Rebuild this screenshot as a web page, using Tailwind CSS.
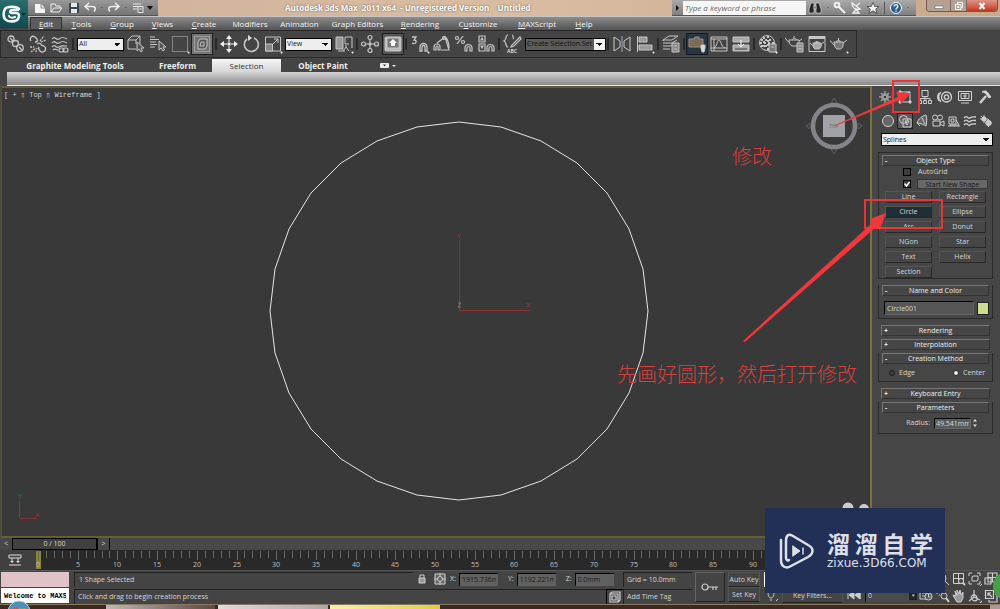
<!DOCTYPE html>
<html lang="en">
<head>
<meta charset="utf-8">
<title>Autodesk 3ds Max 2011 x64</title>
<script src="https://cdn.jsdelivr.net/npm/@tailwindcss/browser@4"></script>
</head>
<body class="relative flex min-h-screen flex-col overflow-hidden bg-[#444] font-['Open_Sans','Noto_Sans_CJK_SC',sans-serif] text-[7px] leading-[10px] text-[#d6d6d6]">

<header class="flex h-[30px]">
  <button aria-label="Application menu" class="flex h-7 w-7 shrink-0 items-center justify-center bg-linear-to-b from-[#2b6d70] to-[#0d4b50]">
    <svg viewBox="0 0 28 28" class="size-7 fill-none stroke-[#eef5f4]" stroke-linecap="round"><path stroke-width="2.600" d="M19 9C17 6 7 6 5 9s-2 9 1 11 10 2 12-1 1-6-2-6h-4c-3 0-2-3 0-3h6"/><path stroke-width="2.200" d="M9 16c1 2 4 2 6 1"/><path stroke="none" fill="#082c30" d="M21 13h5l-2.500 3z"/></svg>
  </button>
  <div class="flex min-w-0 grow flex-col">
    <div class="flex h-4 bg-linear-to-r from-[#cfb19b] via-[#d9bda2] to-[#c9a98c]">
      <div class="flex w-[130px] shrink-0 items-center border-b border-[#555] bg-linear-to-b from-[#999] to-[#747474] pl-1">
        <button aria-label="New" class="w-4"><svg viewBox="0 0 16 16" class="size-4"><path d="M3 4h6l4 4v5H3z" fill="#f4f4f4"/><path d="M9 4v4h4" fill="none" stroke="#888"/></svg></button>
        <button aria-label="Open" class="w-[18px]"><svg viewBox="0 0 16 16" class="size-4 fill-none stroke-[#f0f0f0]"><path d="M3 12V4h4l1 2h4v2M3 12l3-4h8l-3 4z"/></svg></button>
        <button aria-label="Save" class="w-4"><svg viewBox="0 0 16 16" class="size-4"><path d="M3 3h10v10H3z" fill="#374654"/><path d="M5 3h6v4H5zM5 9h6v4H5z" fill="#e8e8e8"/></svg></button>
        <button aria-label="Undo" class="w-4"><svg viewBox="0 0 16 16" class="size-4 fill-none stroke-[#f0f0f0]" stroke-width="1.500"><path d="M7 3L3 6.500 7 10M4 6.500h6c4 0 4 3 2 5"/></svg></button>
        <span class="w-2 text-center text-[#222]">·</span>
        <button aria-label="Redo" class="w-4"><svg viewBox="0 0 16 16" class="size-4 fill-none stroke-[#f0f0f0]" stroke-width="1.500"><path d="M9 3l4 3.500L9 10M12 6.500H6c-4 0-4 3-2 5"/></svg></button>
        <span class="w-2 text-center text-[#222]">·</span>
        <button aria-label="Project folder" class="w-4"><svg viewBox="0 0 16 16" class="size-4 fill-none stroke-[#e8e8e8]"><path d="M3 4h8M3 6.500h8M3 9h4M8 6.500h5v6H8zM9.500 9h2"/></svg></button>
        <button aria-label="Customize toolbar" class="w-2"><svg viewBox="0 0 8 8" class="size-2"><path d="M1 2h6L4 6z" fill="#111"/></svg></button>
      </div>
      <h1 class="min-w-0 grow truncate pl-[127px] text-[8px] leading-4 font-bold whitespace-pre text-white [text-shadow:0_0_2px_#5b4a40]">Autodesk 3ds Max  2011 x64  - Unregistered Version    Untitled</h1>
      <div class="flex w-[244px] shrink-0 items-center border-b border-[#555] bg-linear-to-b from-[#aaa] to-[#808080]">
        <svg viewBox="0 0 11 14" class="h-3.5 w-[11px]"><path d="M4 4l3 3-3 3z" fill="#111"/></svg>
        <input aria-label="Search" placeholder="Type a keyword or phrase" class="h-3.5 w-[123px] bg-[#f6f6f6] px-0.5 text-[8px] text-black italic placeholder:text-[#666]">
        <button aria-label="Find" class="w-[18px] pl-px"><svg viewBox="0 0 16 16" class="size-4 fill-[#262626] stroke-[#e6e6e6]" stroke-width=".6"><path d="M4 3h3v10H2V9zM9 3h3l2 6v4H9zM7 6h2v3H7z"/></svg></button>
        <span class="w-2 text-center text-black">·</span>
        <button aria-label="Subscription" class="w-4"><svg viewBox="0 0 16 16" class="size-4 fill-none stroke-[#f3f3f3]" stroke-width="2"><path d="M7 7l6 6"/><circle cx="5" cy="5" r="2.300"/></svg></button>
        <button aria-label="Communication" class="w-[17px]"><svg viewBox="0 0 16 16" class="size-4 fill-none stroke-[#f0f0f0]" stroke-width="1.300"><path d="M4 3c0 5 3 7 8 6zM8 6l4-3M5 13h6l-3-4z"/></svg></button>
        <button aria-label="Favorites" class="w-4"><svg viewBox="0 0 16 16" class="size-4"><path d="M8 2.500l1.700 4H14l-3.300 2.600L12 13.500 8 10.800 4 13.500l1.300-4.400L2 6.500h4.300z" fill="#f4f4f4" stroke="#333" stroke-width=".7"/></svg></button>
        <span class="mx-[3px] h-3 w-px bg-[#555]"></span>
        <button aria-label="Help" class="w-4"><svg viewBox="0 0 16 16" class="size-4"><circle cx="8" cy="8" r="5.500" fill="#2a5d97" stroke="#fff"/><path d="M6.200 6.500c0-2.500 3.800-2.300 3.600 0C9.700 8 8 7.800 8 9.400M8 10.500v1.300" fill="none" stroke="#fff" stroke-width="1.300"/></svg></button>
        <span class="w-2 text-center text-black">·</span>
      </div>
      <div class="flex w-[84px] shrink-0 pr-0.5 pl-2.5">
        <div class="flex h-3 w-full overflow-hidden rounded-b border border-t-0 border-[#6f5a50]">
          <button aria-label="Minimize" class="flex w-[23px] items-center justify-center bg-[#b5a194]"><svg viewBox="0 0 10 10" class="size-2.5"><path d="M1 5h8v2.500H1z" fill="#fff" stroke="#555" stroke-width=".5"/></svg></button>
          <button aria-label="Restore" class="flex w-[17px] items-center justify-center border-x border-[#7d6b60] bg-[#b5a194]"><svg viewBox="0 0 10 10" class="size-2.5 fill-none stroke-white"><path d="M3.500 3V1.500h5v5H7M1.500 3.500H7v5H1.500zM3.500 5.500h1.500v1H3.500z"/></svg></button>
          <button aria-label="Close" class="flex grow items-center justify-center bg-linear-to-b from-[#dd9487] to-[#c2351c]"><svg viewBox="0 0 10 10" class="size-2.5 stroke-white" stroke-width="2"><path d="M2.500 2l5 6M7.500 2l-5 6"/></svg></button>
        </div>
      </div>
    </div>
    <nav class="flex h-3.5 items-center border-t border-[#c5c5c5] bg-linear-to-b from-[#8d8d8d] to-[#535353] pl-0.5 text-[8px] leading-3 text-[#f2f2f2]">
      <button class="w-8 border border-[#333] bg-[#5c5c5c] leading-[11px]"><u>E</u>dit</button>
      <button class="w-[39px]"><u>T</u>ools</button>
      <button class="w-[42px]"><u>G</u>roup</button>
      <button class="w-[39px]"><u>V</u>iews</button>
      <button class="w-[44px]"><u>C</u>reate</button>
      <button class="w-12">Modifiers</button>
      <button class="w-[51px]">Animation</button>
      <button class="w-[65px]">Graph Editors</button>
      <button class="w-[60px]"><u>R</u>endering</button>
      <button class="w-14">C<u>u</u>stomize</button>
      <button class="w-[62px]"><u>M</u>AXScript</button>
      <button class="w-8"><u>H</u>elp</button>
    </nav>
  </div>
</header>

<div role="toolbar" aria-label="Main toolbar" class="flex h-[28px] w-[857px] items-center border border-[#292929] pl-1 [&_button]:flex [&_button]:h-[22px] [&_button]:w-[22px] [&_button]:shrink-0 [&_button]:items-center [&_button]:justify-center [&_hr]:mx-px [&_hr]:h-3 [&_hr]:w-0.5 [&_hr]:shrink-0 [&_hr]:border-0 [&_hr]:bg-[#292929] [&_svg]:size-5 [&_svg]:fill-none [&_svg]:stroke-[#c6c6c6]">
  <button aria-label="Link"><svg viewBox="0 0 20 20" stroke-width="1.300"><circle cx="5" cy="5" r="3"/><circle cx="9.500" cy="9.500" r="3"/><circle cx="14" cy="14" r="3.300"/><path d="M4 4l3 3M13 13l3 3"/></svg></button>
  <button aria-label="Unlink"><svg viewBox="0 0 20 20" stroke-width="1.300"><path d="M3 7c-2-3 1-6 4-4l2 2c1 2 0 3-2 3M9 10c3-2 4 0 5 2M12 17c3 3 7-1 5-4l-3-2M11 13c-1 2 0 3 1 4"/><path stroke-dasharray="2 1" d="M12 7l4-5M13 8l5-2M3 18l5-4M2 13h4M8 18l1-4"/></svg></button>
  <button aria-label="Bind to space warp"><svg viewBox="0 0 20 20" stroke-width="1.200"><path d="M2 5c3-4 4 2 7 0s4-2 8 0M2 9c3-4 4 2 7 0s4-2 8 0M2 13c3-4 4 2 7 0s3-1 8-1M3 16c2-2 3 0 5 0"/><rect x="9" y="14" width="5" height="4" rx="2"/><rect x="13" y="14" width="5" height="4" rx="2"/></svg></button>
  <hr class="mr-[3px]!">
  <select aria-label="Selection filter" class="mr-px h-[13px] w-[47px] shrink-0 appearance-none border border-black bg-[#eee] bg-[conic-gradient(from_-45deg_at_50%_100%,#111_90deg,transparent_0)] bg-size-[6px_3px] bg-position-[right_3px_center] bg-no-repeat px-px text-[7px] text-[#222]"><option>All</option></select>
  <button aria-label="Select object"><svg viewBox="0 0 20 20"><path d="M2 6l4-4h8v8M2 6v9h8M2 6h8l4-4M10 6v4"/><path fill="#555" d="M11 8v9l2-2 2 3 1.500-1-1.500-3h3z"/></svg></button>
  <button aria-label="Select by name"><svg viewBox="0 0 20 20"><path d="M2 3h5M2 5.500h9M2 8h6M2 10.500h7M2 13h5"/><path fill="#555" d="M11 7v9l2-2 2 3 1.500-1-1.500-3h3z"/></svg></button>
  <button aria-label="Selection region"><svg viewBox="0 0 20 20"><rect x="2.500" y="2.500" width="15" height="15" stroke-dasharray="1 1"/><path d="M18 19l1-1" stroke="#fff" stroke-width="2"/></svg></button>
  <button aria-label="Window crossing" class="mr-px border border-[#202020] bg-[#747474]"><svg viewBox="0 0 20 20"><rect x="2.500" y="2.500" width="15" height="15" stroke-dasharray="1 1"/><path fill="#555" d="M6 8l2-3h7v7l-2 3H6zM9 8h3v4H8z"/></svg></button>
  <hr>
  <button aria-label="Move"><svg viewBox="0 0 20 20" stroke-width="1.500"><path d="M10 3v5M10 12v5M3 10h5M12 10h5"/><path stroke="none" fill="#f2f2f2" d="M10 1l3 4H7zM10 19l3-4H7zM1 10l4-3v6zM19 10l-4-3v6zM8.500 8.500h3v3h-3z"/></svg></button>
  <button aria-label="Rotate"><svg viewBox="0 0 20 20" stroke-width="1.600"><path d="M6 5a7 7 0 1 0 7-1"/><path fill="#ddd" stroke="none" d="M7 1v6l4-3z"/></svg></button>
  <button aria-label="Scale" class="mr-px"><svg viewBox="0 0 20 20"><path d="M2.500 3h15v14h-15z"/><path fill="#888" d="M2.500 10h7v7h-7z"/><path d="M10 10l5-5M11 5h4v4"/><path d="M18 19l1-1" stroke="#fff" stroke-width="2"/></svg></button>
  <select aria-label="Reference coordinate system" class="mr-px h-[13px] w-[47px] shrink-0 appearance-none border border-black bg-[#eee] bg-[conic-gradient(from_-45deg_at_50%_100%,#111_90deg,transparent_0)] bg-size-[6px_3px] bg-position-[right_3px_center] bg-no-repeat px-px text-[7px] text-[#222]"><option>View</option></select>
  <button aria-label="Pivot center"><svg viewBox="0 0 20 20"><path fill="#999" d="M2 3h7v12H2z"/><path d="M11 3h7v11M11 3v7h4M4 17h7M9 17l3-4 3 4M12 13v-2"/><path d="M18 19l1-1" stroke="#fff" stroke-width="2"/></svg></button>
  <hr>
  <button aria-label="Manipulate" class="mr-px"><svg viewBox="0 0 20 20" stroke-width="1.200"><path d="M10 5v10M5 10h10"/><circle cx="10" cy="3.500" r="2"/><circle cx="3.500" cy="10" r="2"/><circle cx="16.500" cy="10" r="2"/><circle cx="10" cy="16.500" r="2"/><circle cx="10" cy="10" r="1"/></svg></button>
  <button aria-label="Keyboard shortcut override" class="border border-[#202020] bg-[#555]"><svg viewBox="0 0 20 20"><rect x="2" y="3" width="16" height="14" rx="1" fill="#bbb"/><rect x="4" y="4" width="12" height="10" rx="1" fill="#777"/><path fill="#fff" stroke="none" d="M10 5l4 4h-2v3H8V9H6z"/></svg></button>
  <hr class="mr-[2px]!">
  <button aria-label="3D snap"><svg viewBox="0 0 20 20" stroke-width="1.300"><path d="M2 3h4l-2 3c4 0 2 5-2 3M10 17v-4a3.500 3.500 0 0 1 7 0v4h-2v-4a1.500 1.500 0 0 0-3 0v4z"/><path d="M18 19l1-1" stroke="#fff" stroke-width="2"/></svg></button>
  <button aria-label="Angle snap"><svg viewBox="0 0 20 20" stroke-width="1.200"><path d="M2 16v-3a3 3 0 0 1 6 0v3H6v-3a1 1 0 0 0-2 0v3zM5 9l8-6 4 13H9M12 2c3 2 5 6 5 12"/><circle cx="12" cy="4" r="1.500"/></svg></button>
  <button aria-label="Percent snap"><svg viewBox="0 0 20 20" stroke-width="1.200"><circle cx="3" cy="4" r="1.500"/><circle cx="9" cy="8" r="1.500"/><path d="M9 2L3 10M11 17v-3a3.500 3.500 0 0 1 7 0v3h-2v-3a1.500 1.500 0 0 0-3 0v3z"/></svg></button>
  <button aria-label="Spinner snap"><svg viewBox="0 0 20 20" stroke-width="1.200"><path d="M3 2h6v6H3zM3 10h6v7H3zM5 6l1-2 1 2zM5 12l1 2 1-2zM11 17v-3a3.500 3.500 0 0 1 7 0v3h-2v-3a1.500 1.500 0 0 0-3 0v3z"/></svg></button>
  <hr>
  <button aria-label="Edit named selection sets" class="mr-[2px] flex-col"><svg viewBox="0 0 20 15" class="h-[15px]! shrink-0" stroke-width="1.200"><path d="M6 1C3 1 5 6 2 7c3 1 1 6 4 6M10 1c2 0 0 3 2 4M18 3l-8 8-1 2 3-1 7-7z"/></svg><span class="text-[5px] leading-[5px] font-bold">ABC</span></button>
  <select aria-label="Named selection sets" class="h-[13px] w-[81px] shrink-0 appearance-none border border-black bg-[#5b5b5b] bg-[conic-gradient(from_-45deg_at_50%_100%,#111_90deg,transparent_0),linear-gradient(#f2f2f2,#f2f2f2)] bg-size-[6px_3px,11px_11px] bg-position-[right_3px_center,right_center] bg-no-repeat pr-3 pl-px text-[7px] text-[#111]"><option>Create Selection Set</option></select>
  <hr class="mr-[2px]!">
  <button aria-label="Mirror" class="mr-px"><svg viewBox="0 0 20 20"><path d="M2 3l6 4v6l-6 4zM18 3l-6 4v6l6 4z"/><path d="M10 2v16" stroke="#9ab"/></svg></button>
  <button aria-label="Align"><svg viewBox="0 0 20 20"><path d="M2.500 2v16"/><path fill="#999" d="M4 3h8v5H4zM4 11h13v5H4z"/><path d="M18 19l1-1" stroke="#fff" stroke-width="2"/></svg></button>
  <hr>
  <button aria-label="Layers"><svg viewBox="0 0 20 20"><path d="M2 6l6-4h9l-6 4zM2 9h9l5-3M2 12h8l3-2M2 6v1M2 15h7"/><path fill="#888" d="M11 9h7v9h-7zM13 12h3M13 15h3"/></svg></button>
  <hr>
  <button aria-label="Graphite modeling tools" class="border border-[#111c26] bg-[#263541]"><svg viewBox="0 0 20 20"><path fill="#796b5a" stroke="#9c917f" d="M2 5h5l1-2h4v2h4v8H2z"/><path fill="#ddd" d="M14 11h4v3l-1 4h-2l-1-4z"/></svg></button>
  <button aria-label="Curve editor"><svg viewBox="0 0 20 20"><path d="M2 3h16v14H2zM2 5h16M5 5v12M2 14h16M5 14c3-1 3-8 5-8s2 7 6 8"/></svg></button>
  <button aria-label="Schematic view"><svg viewBox="0 0 20 20"><path fill="#aaa" d="M2 3h16v5H2zM2 11h16v6H2z"/><path d="M10 6v6M7 10l3 3 3-3" stroke="#fff"/><path d="M4 15h12" stroke="#444"/></svg></button>
  <hr class="mr-[2px]!">
  <button aria-label="Material editor"><svg viewBox="0 0 20 20"><circle cx="9" cy="9" r="7.500"/><path stroke-width="2" stroke-dasharray="2 2" d="M3 6h12M2 9h14M3 12h12M6 3v13M10 2v14"/><path fill="#777" d="M11 10h7v8h-7zM13 13h3"/><path d="M18 19l1-1" stroke="#fff" stroke-width="2"/></svg></button>
  <hr class="mr-[2px]!">
  <button aria-label="Render setup"><svg viewBox="0 0 20 20"><path d="M4 6h10c1 3-1 6-3 6H7C5 11 4 9 4 6zM7 6c1-2 4-2 5 0M9 4V2M4 8C1 7 2 5 0 4M14 7l3-2"/><path fill="#888" d="M12 9h6v9h-6zM13 12h4M13 15h4"/></svg></button>
  <button aria-label="Rendered frame window"><svg viewBox="0 0 20 20"><path d="M2 2.500h16v15H2z"/><path d="M2 4h16" stroke-width="2"/><path fill="#aaa" d="M6 9h8c1 3-1 6-2 6H8c-2-1-2-3-2-6zM8 9c0-2 4-2 4 0M6 12l-3-3M14 10l3-2"/></svg></button>
  <button aria-label="Render"><svg viewBox="0 0 20 20"><path fill="#777" d="M5 8h9c1 4-1 7-3 7H8c-2-1-3-4-3-7zM7 8c1-2 4-2 5 0M9.500 6V4M5 11C2 9 3 7 1 7M14 9l4-3"/><path d="M18 19l1-1" stroke="#fff" stroke-width="2"/></svg></button>
</div>

<div class="flex h-3.5 items-end text-[8px] leading-[13px] font-bold text-[#eee]">
  <button class="ml-[7px] w-[136px]">Graphite Modeling Tools</button>
  <button class="w-[69px]">Freeform</button>
  <button class="w-[69px] bg-linear-to-b from-[#f5f5f5] to-[#d6d6d6] font-normal text-[#333]">Selection</button>
  <button class="w-[84px]">Object Paint</button>
  <button aria-label="Ribbon display" class="ml-[14px]"><svg viewBox="0 0 18 13" class="h-[13px] w-[18px]"><rect x="1" y="4" width="9" height="5" rx="1" fill="#eee"/><path d="M4 5.500h3l-1.500 2z" fill="#333"/><path d="M13 6h4l-2 2z" fill="#eee"/></svg></button>
</div>
<div class="ml-[7px] h-3.5 border-b border-[#eee6d8] bg-linear-to-b from-[#d4d4d4] to-[#8a8a8a]"></div>

<main class="flex grow">
  <div class="flex min-w-0 grow flex-col">
    <section aria-label="Top viewport" class="relative min-h-[452px] grow overflow-hidden border-2 border-t-[#5e5940] border-r-[#7c7040] border-b-[#66602f] border-l-[#4f4b3a] bg-[#393939]">
      <p class="pt-0.5 pl-0.5 font-['Liberation_Mono',monospace] text-[7px]">[ + ▯ Top ▯ Wireframe ]</p>
      <svg viewBox="2 88 868 448" preserveAspectRatio="xMidYMid meet" class="absolute inset-0 size-full fill-none">
        <path stroke="#e6e6e6" d="M459 122L501 127 541 141 577 163 607 193 629 229 643 269 648 311 643 353 629 393 607 429 577 459 541 481 501 495 459 500 417 495 377 481 341 459 311 429 289 393 275 353 270 311 275 269 289 229 311 193 341 163 377 141 417 127Z"/>
        <path stroke="#8f3434" d="M459.500 240V310.500H530M458 234l1.500 2 1.500-2M459.500 236v2M527 303l3 4M530 303l-3 4"/>
        <path stroke="#999" stroke-width=".6" d="M458 303h3l-3 4h3"/>
        <path stroke="#286a35" d="M19.500 518V501M18 494l2 2 2-2M20 496v3"/><path stroke="#872f35" d="M20 518.500h17M36 513l4 4M40 513l-4 4"/><path stroke="#33427d" d="M19 512l3 3"/>
        <g><path stroke="#5e5e66" stroke-width="1" d="M834 98l-3 5h6zM834 154l-3-5h6zM806 126l4-3v6zM862 126l-4-3v6z"/><circle cx="834" cy="126" r="21" stroke="#84848a" stroke-width="4.500"/><path fill="#a1a1a8" d="M823 115h22v22h-22z"/><text x="834" y="128" text-anchor="middle" font-size="5" fill="#6d6d76">TOP</text></g>
        <circle cx="848" cy="508" r="5.500" fill="#ccc"/><circle cx="864" cy="509" r="5" fill="#ccc"/>
      </svg>
    </section>
    <div class="flex h-3 items-stretch bg-[#484848]">
      <button aria-label="Previous frame" class="w-3 leading-3">&lt;</button>
      <button class="w-[86px] border border-r-2 border-black bg-[#404040] leading-[10px]">0 / 100</button>
      <button aria-label="Next frame" class="w-3 border-r border-black leading-3">&gt;</button>
    </div>
    <div class="flex h-5 bg-[#292929]">
      <button aria-label="Open mini curve editor" class="flex w-9 items-center bg-[#404040] pl-2"><svg viewBox="0 0 14 14" class="size-3.5 fill-none stroke-[#ddd]"><path d="M1 2h12v3H1zM1 12h12M4 5v5M10 5v5M2.500 8.500h3M8.500 8.500h3"/></svg></button>
      <svg id="track" viewBox="36 550 836 20" preserveAspectRatio="xMinYMid meet" class="h-5 min-w-0 grow fill-[#c0c0c0] text-[7px]"><rect x="36" y="551" width="5" height="18" fill="#8b852c"/></svg>
    </div>
  </div>

  <aside class="w-32 shrink-0 bg-[#464646] pr-[7px] pl-[9px] [&_svg]:fill-none [&_svg]:stroke-[#d0d0d0]">
    <div class="-mx-[7px] flex h-[22px] items-center pl-px [&_button]:flex [&_button]:w-5 [&_button]:justify-center [&_svg]:size-4">
      <button aria-label="Create"><svg viewBox="0 0 16 16" class="stroke-[#999]!" stroke-width="1.500"><circle cx="8" cy="8" r="3" fill="#888"/><path d="M8 2v12M2 8h12M4 4l8 8M12 4l-8 8"/><path d="M8 7v2" stroke="#333" stroke-width="2"/></svg></button>
      <button aria-label="Modify"><svg viewBox="0 0 16 16"><path d="M3 3h10v10H3z"/><path d="M3 13C4 7 8 4 13 3" stroke-width="1.500"/><path d="M2 2h2v2H2zM12 12h2v2h-2zM2 12h2v2H2z" fill="#ccc"/></svg></button>
      <button aria-label="Hierarchy"><svg viewBox="0 0 16 16"><path d="M5 1.500h6v6H5zM8 8v3M3 11V9.500h10V11M1.500 11.500h3v3h-3zM6.500 11.500h3v3h-3zM11.500 11.500h3v3h-3z"/></svg></button>
      <button aria-label="Motion"><svg viewBox="0 0 16 16" stroke-width="1.300"><circle cx="9.500" cy="8" r="5"/><circle cx="9.500" cy="8" r="2.200"/><path d="M4 3C1 6 1 10 4 13M2 4c-2 3-2 5 0 8"/></svg></button>
      <button aria-label="Display"><svg viewBox="0 0 16 16"><path d="M1.500 2.500h13v9h-13zM4 4.500h8v5H4zM4 14h8M7 6h2v2H7z"/></svg></button>
      <button aria-label="Utilities"><svg viewBox="0 0 16 16"><path d="M3 14l6-7" stroke-width="2.500"/><path d="M5 3c3-2 5-1 6 1l3 4-2 1-3-4c-1-1-2-2-4-2z" fill="#ddd"/></svg></button>
    </div>
    <div class="flex h-[25px] items-center justify-between [&_svg]:size-3.5">
      <button aria-label="Geometry"><svg viewBox="0 0 14 14"><circle cx="7" cy="7" r="5.500" fill="#666"/></svg></button>
      <button aria-label="Shapes" class="border border-[#222] bg-[#5c5c5c]"><svg viewBox="0 0 14 14"><circle cx="5.500" cy="5.500" r="4"/><path d="M5 5h8v8H5z"/><path d="M7 7h4l-2 4z"/></svg></button>
      <button aria-label="Lights"><svg viewBox="0 0 14 14"><path d="M11 1C7 2 3 5 2 9c2 0 6 1 9 3 1-4 1-8 0-11zM2 9l3 3M7 4l3 6" fill="#666"/></svg></button>
      <button aria-label="Cameras"><svg viewBox="0 0 14 14"><circle cx="4" cy="3.500" r="2.500"/><circle cx="9" cy="3.500" r="2.500"/><path d="M2 7h7v5H2zM9 9l4-2v5l-4-2"/></svg></button>
      <button aria-label="Helpers"><svg viewBox="0 0 14 14"><path d="M2 3h7v7H2zM4 5h3v3H4zM9 6l3 5H3M1 12h12"/></svg></button>
      <button aria-label="Space warps"><svg viewBox="0 0 14 14" stroke-width="1.300"><path d="M1 4c3-4 4 2 6 0s3-1 6-1M1 7.500c3-4 4 2 6 0s3-1 6-1M1 11c3-4 4 2 6 0s3-1 6-1"/></svg></button>
      <button aria-label="Systems"><svg viewBox="0 0 14 14" stroke-width="2"><circle cx="5" cy="5" r="1.500"/><circle cx="9.500" cy="9" r="2"/><path stroke-width="1" d="M5 1v8M1 5h8M2 2l6 6M9.500 5v8M6 9h7"/></svg></button>
    </div>
    <select aria-label="Category" class="block h-[13px] w-full appearance-none border border-black bg-[#eee] bg-[conic-gradient(from_-45deg_at_50%_100%,#111_90deg,transparent_0)] bg-size-[6px_3px] bg-position-[right_3px_center] bg-no-repeat px-px text-[7px] text-[#222]"><option>Splines</option></select>

    <div class="-ml-[3px] flex flex-col gap-1.5 pt-1.5">
      <section class="border border-[#2b2b2b] px-[3px] pt-0.5">
        <button class="relative block h-[11px] w-full border border-[#777] border-r-[#333] border-b-[#333] leading-[9px] text-[#eee]"><span class="absolute left-0.5 font-bold">-</span>Object Type</button>
        <label class="flex h-3 items-center gap-[7px] pl-[21px]"><input type="checkbox" class="size-2 appearance-none border border-black bg-[#3d3d3d]">AutoGrid</label>
        <div class="flex h-[11px] items-center gap-[6px] pl-[21px]">
          <span class="relative flex size-2 shrink-0"><input id="startnew" type="checkbox" checked class="size-2 appearance-none border border-black bg-[#3d3d3d]"><svg viewBox="0 0 8 8" class="pointer-events-none absolute inset-0 size-2" stroke-width="1.500"><path d="M1.500 3.500l2 2.500L6.500 2" stroke="#fff"/></svg></span>
          <label for="startnew" class="h-[10px] w-[71px] border border-[#383838] bg-[#686868] text-center leading-[9px] text-[#151515]">Start New Shape</label></div>
        <div class="grid grid-cols-2 gap-x-[7px] gap-y-[3px] px-[3px] pt-0.5 [&_button]:h-[12px] [&_button]:border [&_button]:border-[#555] [&_button]:border-r-[#292929] [&_button]:border-b-[#292929] [&_button]:leading-[10px]">
          <button>Line</button><button>Rectangle</button>
          <button class="bg-[#202e38]">Circle</button><button>Ellipse</button>
          <button>Arc</button><button>Donut</button>
          <button>NGon</button><button>Star</button>
          <button>Text</button><button>Helix</button>
          <button>Section</button>
        </div>
      </section>
      <section class="border border-t-0 border-[#2b2b2b] px-[3px] pb-[3px]">
        <button class="relative block h-[11px] w-full border border-[#777] border-r-[#333] border-b-[#333] leading-[9px] text-[#eee]"><span class="absolute left-0.5 font-bold">-</span>Name and Color</button>
        <div class="flex items-center gap-[3px] pt-[5px] pl-0.5"><input aria-label="Name" value="Circle001" class="h-3.5 w-[92px] min-w-0 border border-t-black border-r-[#666] border-b-[#666] border-l-black bg-[#555] px-0.5"><button aria-label="Object color" class="h-[13px] w-3 shrink-0 border border-[#222] bg-[#ccdc91]"></button></div>
      </section>
      <div class="flex flex-col gap-[3px]">
        <button class="relative mx-[3px] block h-[11px] border border-[#777] border-r-[#333] border-b-[#333] leading-[9px] text-[#eee]"><span class="absolute left-0.5 font-bold">+</span>Rendering</button>
        <button class="relative mx-[3px] block h-[11px] border border-[#777] border-r-[#333] border-b-[#333] leading-[9px] text-[#eee]"><span class="absolute left-0.5 font-bold">+</span>Interpolation</button>
        <section class="border border-t-0 border-[#2b2b2b] px-[3px]">
          <button class="relative block h-[11px] w-full border border-[#777] border-r-[#333] border-b-[#333] leading-[9px] text-[#eee]"><span class="absolute left-0.5 font-bold">-</span>Creation Method</button>
          <div class="flex h-[17px] items-center justify-between pr-1 pl-[7px]"><label class="flex items-center gap-1"><input name="cm" type="radio" class="size-1.5 appearance-none rounded-full border border-[#222] bg-[#3d3d3d]">Edge</label><label class="flex items-center gap-1"><input name="cm" type="radio" checked class="size-1.5 appearance-none rounded-full border border-[#222] bg-[#eee]">Center</label></div>
        </section>
      </div>
      <div class="flex flex-col gap-[3px]">
        <button class="relative mx-[3px] block h-[11px] border border-[#777] border-r-[#333] border-b-[#333] leading-[9px] text-[#eee]"><span class="absolute left-0.5 font-bold">+</span>Keyboard Entry</button>
        <section class="border border-t-0 border-[#2b2b2b] px-[3px]">
          <button class="relative block h-[11px] w-full border border-[#777] border-r-[#333] border-b-[#333] leading-[9px] text-[#eee]"><span class="absolute left-0.5 font-bold">-</span>Parameters</button>
          <div class="flex h-5 items-center justify-end pr-2.5"><label for="radius" class="mr-1">Radius:</label><input id="radius" value="49.541mm" class="h-[11px] w-[37px] border border-t-black border-r-[#666] border-b-[#666] border-l-black bg-[#5b5b5b] px-px"><svg viewBox="0 0 8 12" class="h-3 w-2"><path d="M2 4.500h4L4 2zM2 7.500h4L4 10z" fill="#ddd" stroke="none"/></svg></div>
        </section>
      </div>
    </div>
  </aside>
</main>

<footer class="flex h-[34px] border-t border-[#555] bg-[#444] [&_svg]:fill-none [&_svg]:stroke-[#cfcfcf]">
  <div class="flex w-[69px] shrink-0 flex-col gap-px py-px pl-px font-['Liberation_Mono',monospace] text-[7px] font-bold text-black">
    <div class="h-[15px] bg-[#dfc3c8]"></div>
    <input aria-label="MAXScript listener" value="Welcome to MAXScript." class="h-[15px] w-full bg-white px-[3px]">
  </div>
  <div class="ml-[5px] flex w-[618px] shrink-0 flex-col">
    <div class="flex h-4 items-center">
      <p class="h-[15px] w-[339px] border-t border-l border-[#222] pl-1 leading-[14px]">1 Shape Selected</p>
      <button aria-label="Selection lock" class="flex w-[18px] justify-center"><svg viewBox="0 0 12 12" class="size-3"><path d="M3 5h6v5H3z" fill="#999"/><path d="M4 5V2h4v3"/></svg></button>
      <button aria-label="Absolute mode" class="flex w-[18px] justify-center"><svg viewBox="0 0 12 12" class="size-3"><path d="M1 1h10v10H1z" fill="#666"/><circle cx="6" cy="6" r="2.500"/><path d="M6 0v3M6 9v3M0 6h3M9 6h3"/></svg></button>
      <label class="flex items-center gap-px pl-px">X:<input value="1915.736m" class="ml-0.5 h-[13px] w-[39px] border-t border-l border-black bg-[#606060] px-0.5 text-[#1c1c1c]"></label>
      <label class="ml-2.5 flex items-center gap-px">Y:<input value="1192.221m" class="ml-0.5 h-[13px] w-[39px] border-t border-l border-black bg-[#606060] px-0.5 text-[#1c1c1c]"></label>
      <label class="ml-2.5 flex items-center gap-px">Z:<input value="0.0mm" class="ml-0.5 h-[13px] w-[39px] border-t border-l border-black bg-[#606060] px-0.5 text-[#1c1c1c]"></label>
      <p class="ml-auto h-[15px] w-[69px] border-t border-l border-[#222] pl-[3px] leading-[14px]">Grid = 10.0mm</p>
    </div>
    <div class="flex h-[17px] items-end">
      <p class="h-[15px] grow border-t border-l border-[#222] pl-[3px] leading-[14px]">Click and drag to begin creation process</p>
      <button aria-label="Adaptive degradation" class="flex w-[17px] justify-center border-t border-l border-black py-px"><svg viewBox="0 0 12 12" class="size-3"><path d="M1 3h8v8H1zM1 3l2-2h8v8l-2 2M3 5h4v4H3z" stroke-width="1.200"/></svg></button>
      <button class="h-[15px] w-[69px] border-t border-l border-[#222] pl-[3px] text-left leading-[14px]">Add Time Tag</button>
    </div>
  </div>
  <button aria-label="Set keys" class="mt-px ml-[3px] flex h-[30px] w-[30px] shrink-0 items-center justify-center border border-[#666] border-r-[#222] border-b-[#222]"><svg viewBox="0 0 18 10" class="h-2.5 w-[18px]" stroke-width="1.200"><circle cx="4" cy="5" r="3"/><path d="M7 5h10M12 5v3M15 5v3"/></svg></button>
  <div class="ml-[3px] flex w-8 shrink-0 flex-col pt-px">
    <button class="h-[15px] border border-[#555] border-b-[#222] leading-[13px] whitespace-nowrap">Auto Key</button>
    <button class="h-[15px] border border-[#555] border-b-[#222] leading-[13px] whitespace-nowrap">Set Key</button>
  </div>
  <div class="ml-1 flex grow flex-col">
    <select aria-label="Key selection" class="mt-px h-[15px] w-20 bg-white text-black"><option>Selected</option></select>
    <div class="flex h-4 items-center">
      <svg viewBox="0 0 14 14" class="ml-px size-3.5"><path d="M3 4c0 4 1 6 3 6s3-2 3-6M5 12h2M11 13l2-2"/></svg>
      <button class="ml-[3px] h-[15px] w-[61px] border border-[#555] border-b-[#222] leading-[13px]">Key Filters...</button>
      <button aria-label="Go to start" class="ml-1"><svg viewBox="0 0 14 12" class="h-3 w-3.5"><path d="M1 2v8M13 2v8M7 2L2 6l5 4zM13 2L8 6l5 4z" fill="#ccc"/></svg></button>
      <input aria-label="Current frame" value="0" class="ml-1 h-[13px] w-11 border-l border-black bg-[#4a4a4a] px-0.5">
      <button aria-label="Frame step" class="w-2 bg-[#222] text-[5px]">▾</button>
      <svg viewBox="0 0 14 14" class="ml-0.5 size-3.5"><path d="M1 3h8v8H1zM3 5h4M3 8h3"/><circle cx="9.500" cy="8.500" r="3.500" fill="#555"/><path d="M9.500 6v3h2"/></svg>
    </div>
  </div>
  <div class="mr-0.5 grid shrink-0 grid-cols-4 gap-x-0.5 gap-y-px [&_svg]:size-3.5">
    <button aria-label="Zoom"><svg viewBox="0 0 14 14"><circle cx="6" cy="6" r="4"/><path d="M9 9l4 4"/></svg></button>
    <button aria-label="Zoom all"><svg viewBox="0 0 14 14"><path d="M1.500 1.500h10v10h-10zM6.500 1v11M1 6.500h11"/><circle cx="9" cy="9" r="2.500" fill="#444"/><path d="M11 11l2 2" stroke-width="2"/></svg></button>
    <button aria-label="Zoom extents"><svg viewBox="0 0 14 14"><path d="M1 4V1h3M9 1h3v3M12 9v3H9M4 12H1V9M4 5l1-1h5v4l-1 1H4zM12 14l2-2"/></svg></button>
    <button aria-label="Zoom extents all"><svg viewBox="0 0 14 14"><path d="M4 1h9v9H4zM8.500 1v9M4 5.500h9M1 6h6v6H1z" stroke-width="1.200"/></svg></button>
    <button aria-label="Field of view"><svg viewBox="0 0 14 14"><circle cx="8" cy="7" r="3"/><path d="M10 9l3 4" stroke-width="2"/><path d="M0 4h2M3 6h1"/></svg></button>
    <button aria-label="Pan"><svg viewBox="0 0 14 14"><path fill="#999" d="M5 13L2 8l-1-2 3 1-1-5 2 4V1l2 4 1-4 1 5 2-3v6l-2 4z"/></svg></button>
    <button aria-label="Orbit"><svg viewBox="0 0 14 14"><path d="M6 1v7l-5 4M6 8l6 3M3 8c2-3 5-3 6 1s-5 4-6-1M12 14l2-2" stroke-width="1.200"/></svg></button>
    <button aria-label="Maximize viewport"><svg viewBox="0 0 14 14"><path d="M1.500 1.500h8v8h-8zM4 4l4 4M4 7V4h3M11 5h2v8H5v-2" stroke-width="1.200"/></svg></button>
  </div>
</footer>

<div class="flex h-[5px] border-t border-[#8b7860] bg-[#3a2a22] pl-[106px]">
  <div class="mr-[3px] w-[109px] bg-linear-to-r from-[#bbb] to-[#5c4b40]"></div>
  <div class="mr-0.5 w-[110px] bg-linear-to-r from-[#ddd] to-[#a9a9a9]"></div>
  <div class="w-[110px] bg-linear-to-r from-[#f7f2a5] to-[#e1cd38]"></div>
  <div class="ml-auto w-2.5 bg-[#a89a90]"></div>
</div>
<svg viewBox="0 0 24 9" class="absolute bottom-0 left-[7px] h-[9px] w-6"><circle cx="12" cy="12" r="11" fill="#4d8fb5" stroke="#b9d3df"/><path d="M6 9c2-3 4-2 5-1v4H5z" fill="#e5562f"/><path d="M12 8c2 1 4 1 6 0v4h-6z" fill="#88b84a"/></svg>
<svg viewBox="0 0 7 30" class="absolute right-0 bottom-2 h-[30px] w-[7px]"><circle cx="14" cy="15" r="14" fill="#43a047"/></svg>

<svg viewBox="600 75 400 320" class="pointer-events-none absolute top-[75px] right-0 h-80 w-[400px]">
  <g fill="none" stroke="#e8353b" stroke-width="2"><path d="M893 81h26v31h-26z"/><path d="M865 200h77v28h-77z"/></g>
  <g fill="#f0373c"><path d="M833 126l65-29-2-5 15 1-10 11-1-4-65 26z"/><path d="M743 341l129-118-2-4 16-6-6 17-4-3-131 115z"/></g>
  <g fill="#d8403f" font-size="20" font-weight="300" font-family="Noto Sans CJK SC, sans-serif"><text x="732" y="164">修改</text><text x="617" y="382">先画好圆形，然后打开修改</text></g>
</svg>

<div class="absolute right-[55px] bottom-4 flex h-[85px] w-[180px] items-center gap-3 bg-[#222f57] pr-3 pl-3.5 text-[#dde0ea]">
  <svg viewBox="0 0 36 38" class="h-[38px] w-9 shrink-0 fill-none stroke-[#dde0ea]" stroke-width="2.500" stroke-linecap="round"><path d="M2 8v20c0 7 5 9 10 6l17-9c6-4 6-9 0-12L14 4C9 1 7 4 7 9v17c0 2 2 3 3 2"/><path d="M14 14l7 5-7 5z" fill="#dde0ea" stroke-width="1"/><path d="M24 16v6" stroke-width="1.500"/></svg>
  <div class="grow pb-1">
    <p class="flex justify-between font-['Noto_Sans_CJK_SC',sans-serif] text-[23px] leading-7 font-bold"><span>溜</span><span>溜</span><span>自</span><span>学</span></p>
    <p class="font-['DejaVu_Sans',sans-serif] text-[12px] leading-3">zixue.3D66.COM</p>
  </div>
</div>

<script>
  const track = document.getElementById('track');
  const ns = 'http://www.w3.org/2000/svg';
  for (let f = 0; f <= 100; f++) {
    const x = Math.round(38 + f * 7.94);
    const r = document.createElementNS(ns, 'rect');
    r.setAttribute('x', x); r.setAttribute('y', 551);
    r.setAttribute('width', 1); r.setAttribute('height', f % 5 ? 7 : 9);
    r.setAttribute('fill', '#686868');
    track.append(r);
    if (f % 5 === 0 && f <= 90) {
      const t = document.createElementNS(ns, 'text');
      t.setAttribute('x', x); t.setAttribute('y', 567);
      t.setAttribute('text-anchor', 'middle');
      t.textContent = f;
      track.append(t);
    }
  }
</script>
</body>
</html>
